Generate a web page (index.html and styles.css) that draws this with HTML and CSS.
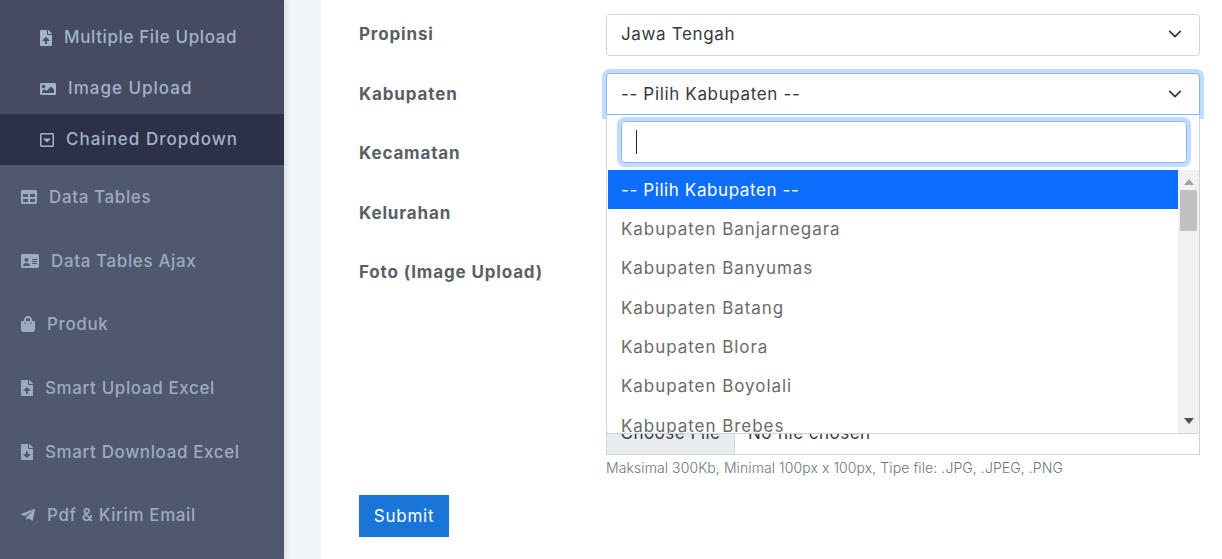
FILE: index.html
```html
<!DOCTYPE html>
<html lang="id">
<head>
<meta charset="utf-8">
<title>Chained Dropdown</title>
<link rel="stylesheet" href="styles.css">
</head>
<body>
<div class="app">
  <aside class="sidebar">
    <ul class="submenu">
      <li class="subitem"><svg class="ic ic-file" viewBox="0 0 384 512"><path d="M224 136V0H24C10.7 0 0 10.7 0 24v464c0 13.3 10.7 24 24 24h336c13.3 0 24-10.7 24-24V160H248c-13.2 0-24-10.8-24-24zm65.18 216.01H224v80c0 8.84-7.16 16-16 16h-32c-8.84 0-16-7.16-16-16v-80H94.82c-14.28 0-21.41-17.29-11.27-27.36l96.42-95.7c6.65-6.61 17.39-6.61 24.04 0l96.42 95.7c10.15 10.07 3.03 27.36-11.25 27.36zM377 105L279.1 7c-4.5-4.5-10.6-7-17-7H256v128h128v-6.1c0-6.3-2.5-12.4-7-16.9z"/></svg><span>Multiple File Upload</span></li>
      <li class="subitem"><svg class="ic ic-image" viewBox="0 0 512 512"><path d="M464 448H48c-26.51 0-48-21.49-48-48V112c0-26.51 21.49-48 48-48h416c26.51 0 48 21.49 48 48v288c0 26.51-21.49 48-48 48zM112 120c-30.928 0-56 25.072-56 56s25.072 56 56 56 56-25.072 56-56-25.072-56-56-56zM64 384h384V272l-87.515-87.515c-4.686-4.686-12.284-4.686-16.971 0L208 320l-55.515-55.515c-4.686-4.686-12.284-4.686-16.971 0L64 336v48z"/></svg><span class="wide">Image Upload</span></li>
      <li class="subitem active"><svg class="ic ic-caret" viewBox="0 0 448 512"><path d="M125.1 208h197.8c10.7 0 16.1 13 8.5 20.5l-98.9 98.3c-4.7 4.7-12.2 4.7-16.9 0l-98.9-98.3c-7.7-7.5-2.3-20.5 8.4-20.5zM448 80v352c0 26.5-21.5 48-48 48H48c-26.5 0-48-21.5-48-48V80c0-26.5 21.5-48 48-48h352c26.5 0 48 21.5 48 48zm-48 346V86c0-3.3-2.7-6-6-6H54c-3.3 0-6 2.7-6 6v340c0 3.3 2.7 6 6 6h340c3.3 0 6-2.7 6-6z"/></svg><span class="wide">Chained Dropdown</span></li>
    </ul>
    <ul class="menu">
      <li class="item"><svg class="ic ic-table" viewBox="0 0 512 512"><path d="M464 32H48C21.49 32 0 53.49 0 80v352c0 26.51 21.49 48 48 48h416c26.51 0 48-21.49 48-48V80c0-26.51-21.49-48-48-48zM224 416H64v-96h160v96zm0-160H64v-96h160v96zm224 160H288v-96h160v96zm0-160H288v-96h160v96z"/></svg><span>Data Tables</span></li>
      <li class="item"><svg class="ic ic-id" viewBox="0 0 576 512"><path fill-rule="evenodd" d="M528 32H48C21.5 32 0 53.5 0 80v352c0 26.5 21.5 48 48 48h480c26.5 0 48-21.5 48-48V80c0-26.5-21.5-48-48-48zM352 200c0-4.4 3.6-8 8-8h144c4.4 0 8 3.6 8 8v16c0 4.4-3.6 8-8 8H360c-4.4 0-8-3.6-8-8v-16zm0 64c0-4.4 3.6-8 8-8h144c4.4 0 8 3.6 8 8v16c0 4.4-3.6 8-8 8H360c-4.4 0-8-3.6-8-8v-16zm0 64c0-4.4 3.6-8 8-8h144c4.4 0 8 3.6 8 8v16c0 4.4-3.6 8-8 8H360c-4.4 0-8-3.6-8-8v-16zM176 160c35.3 0 64 28.7 64 64s-28.7 64-64 64-64-28.7-64-64 28.7-64 64-64zM67.1 396.2C75.5 370.5 99.6 320 128 320h8.2c12.3 5.1 25.7 8 39.8 8s27.6-2.9 39.8-8h8.2c28.4 0 52.5 50.5 60.9 76.2 3.2 9.9-5.2 19.8-15.6 19.8H82.7c-10.4 0-18.8-10-15.6-19.8z"/></svg><span>Data Tables Ajax</span></li>
      <li class="item"><svg class="ic ic-bag" viewBox="0 0 448 512"><path d="M352 160v-32C352 57.42 294.579 0 224 0 153.42 0 96 57.42 96 128v32H0v272c0 44.183 35.817 80 80 80h288c44.183 0 80-35.817 80-80V160h-96zm-192-32c0-35.29 28.71-64 64-64s64 28.71 64 64v32H160v-32zm160 120c-13.255 0-24-10.745-24-24s10.745-24 24-24 24 10.745 24 24-10.745 24-24 24zm-192 0c-13.255 0-24-10.745-24-24s10.745-24 24-24 24 10.745 24 24-10.745 24-24 24z"/></svg><span>Produk</span></li>
      <li class="item"><svg class="ic ic-file2" viewBox="0 0 384 512"><path d="M224 136V0H24C10.7 0 0 10.7 0 24v464c0 13.3 10.7 24 24 24h336c13.3 0 24-10.7 24-24V160H248c-13.2 0-24-10.8-24-24zm65.18 216.01H224v80c0 8.84-7.16 16-16 16h-32c-8.84 0-16-7.16-16-16v-80H94.82c-14.28 0-21.41-17.29-11.27-27.36l96.42-95.7c6.65-6.61 17.39-6.61 24.04 0l96.42 95.7c10.15 10.07 3.03 27.36-11.25 27.36zM377 105L279.1 7c-4.5-4.5-10.6-7-17-7H256v128h128v-6.1c0-6.3-2.5-12.4-7-16.9z"/></svg><span>Smart Upload Excel</span></li>
      <li class="item"><svg class="ic ic-file2" viewBox="0 0 384 512"><path d="M224 136V0H24C10.7 0 0 10.7 0 24v464c0 13.3 10.7 24 24 24h336c13.3 0 24-10.7 24-24V160H248c-13.2 0-24-10.8-24-24zm76.45 211.36l-96.42 95.7c-6.65 6.61-17.39 6.61-24.04 0l-96.42-95.7C73.42 337.29 80.54 320 94.82 320H160v-80c0-8.84 7.16-16 16-16h32c8.84 0 16 7.16 16 16v80h65.18c14.28 0 21.4 17.29 11.27 27.36zM377 105L279.1 7c-4.5-4.5-10.6-7-17-7H256v128h128v-6.1c0-6.3-2.5-12.4-7-16.9z"/></svg><span>Smart Download Excel</span></li>
      <li class="item"><svg class="ic ic-plane" viewBox="0 0 448 512"><path d="M446.7 98.6l-67.6 318.8c-5.1 22.5-18.4 28.1-37.3 17.5l-103-75.9-49.7 47.8c-5.5 5.5-10.1 10.1-20.7 10.1l7.4-104.9 190.9-172.5c8.3-7.4-1.8-11.5-12.9-4.1L117.8 284 16.2 252.2c-22.1-6.9-22.5-22.1 4.6-32.7L418.2 66.4c18.4-6.9 34.5 4.1 28.5 32.2z"/></svg><span>Pdf &amp; Kirim Email</span></li>
    </ul>
  </aside>
  <div class="gutter"></div>
  <main class="content">
    <form class="form">
      <div class="row">
        <label class="label">Propinsi</label>
        <div class="select"><span>Jawa Tengah</span><svg class="chev" viewBox="0 0 16 16"><path d="M2 5l6 6 6-6"/></svg></div>
      </div>
      <div class="row">
        <label class="label">Kabupaten</label>
        <div class="select-wrap">
          <div class="select open"><span>-- Pilih Kabupaten --</span><svg class="chev" viewBox="0 0 16 16"><path d="M2 5l6 6 6-6"/></svg></div>
          <div class="dropdown">
            <div class="search-box"><div class="search"><i class="caret"></i></div></div>
            <div class="results">
              <ul class="options">
                <li class="option selected">-- Pilih Kabupaten --</li>
                <li class="option">Kabupaten Banjarnegara</li>
                <li class="option">Kabupaten Banyumas</li>
                <li class="option">Kabupaten Batang</li>
                <li class="option">Kabupaten Blora</li>
                <li class="option">Kabupaten Boyolali</li>
                <li class="option">Kabupaten Brebes</li>
              </ul>
              <div class="scrollbar">
                <svg class="arrow" viewBox="0 0 10 6"><path d="M5 0l5 6H0z"/></svg>
                <div class="thumb"></div>
                <div class="track"></div>
                <svg class="arrow" viewBox="0 0 10 6"><path d="M0 0h10L5 6z"/></svg>
              </div>
            </div>
          </div>
        </div>
      </div>
      <div class="row">
        <label class="label">Kecamatan</label>
        <div class="select"></div>
      </div>
      <div class="row">
        <label class="label">Kelurahan</label>
        <div class="select"></div>
      </div>
      <div class="row row-foto">
        <label class="label">Foto (Image Upload)</label>
        <div class="foto">
          <div class="file"><span class="file-btn">Choose File</span><span class="file-name">No file chosen</span></div>
          <p class="hint">Maksimal 300Kb, Minimal 100px x 100px, Tipe file: .JPG, .JPEG, .PNG</p>
        </div>
      </div>
      <button type="button" class="submit">Submit</button>
    </form>
  </main>
</div>
</body>
</html>
```
FILE: styles.css
```css
* { box-sizing: border-box; }
html, body { margin: 0; padding: 0; height: 559px; overflow: hidden; background: #fff; }
body { font-family: Inter, "Open Sans", Arial, sans-serif; font-size: 16px; color: #343a40; }
ul { list-style: none; margin: 0; padding: 0; }
.app { display: flex; height: 559px; }

.sidebar { width: 284px; flex: none; background: #50586f; font-weight: 500; font-size: 17px; letter-spacing: .62px; position: relative; z-index: 1; box-shadow: 2px 0 6px rgba(60,70,90,.12); }
.submenu { background: #454b60; padding-top: 12px; }
.subitem { height: 51px; display: flex; align-items: center; padding-left: 40px; color: #a3b3cc; }
.subitem span { padding-bottom: 2px; }
.subitem .wide { letter-spacing: 1px; }
.subitem.active { background: #2d3148; }
.menu { color: #9eabbf; }
.item { height: 63.7px; display: flex; align-items: center; padding-left: 21px; }
.ic { fill: currentColor; flex: none; }
.ic-file { width: 12px; height: 16px; margin-right: 12px; }
.ic-image { width: 16px; height: 16px; margin-right: 12px; }
.ic-caret { width: 14px; height: 16px; margin-right: 12px; }
.ic-table { width: 16px; height: 16px; margin-right: 12px; }
.ic-id { width: 18px; height: 16px; margin-right: 12px; }
.ic-bag { width: 14px; height: 16px; margin-right: 12px; }
.ic-file2 { width: 12px; height: 16px; margin-right: 12px; }
.ic-plane { width: 14px; height: 16px; margin-right: 12px; }

.gutter { width: 37px; flex: none; background: #f1f4f8; }
.content { flex: 1; padding: 13.6px 22px 0 38px; min-width: 0; }
.row { display: grid; grid-template-columns: 247px 1fr; margin-bottom: 17.5px; }
.label { font-weight: 700; font-size: 17px; letter-spacing: .85px; color: #5a5f66; line-height: 41px; padding-top: .5px; }
.select, .select-wrap { position: relative; }
.select { height: 42px; border: 1px solid #ced4da; border-radius: 4px; background: #fff; display: flex; align-items: center; justify-content: space-between; padding: 0 14px 1px; color: #343a40; font-size: 17px; letter-spacing: .65px; }
.select.open { border-color: #86b7fe; border-radius: 4px 4px 0 0; box-shadow: 0 0 0 4px #c2dbfe; }
.chev { width: 14px; height: 14px; fill: none; stroke: #343a40; stroke-width: 2; stroke-linecap: round; stroke-linejoin: round; margin-right: 3px; }

.dropdown { position: absolute; left: 0; right: 0; top: 42px; z-index: 5; background: #fff; border: 1px solid #ced4da; border-top: 0; border-radius: 0 0 4px 4px; }
.search-box { padding: 6px 12px 7px 14px; }
.search { height: 42px; border: 1px solid #86b7fe; border-radius: 4px; box-shadow: 0 0 0 4px #c2dbfe; padding: 8px 14px; }
.caret { display: block; width: 1px; height: 24px; background: #222; }
.results { display: flex; height: 263px; overflow: hidden; }
.options { flex: 1; padding-left: 1px; color: #6b6b6b; font-size: 17px; letter-spacing: .95px; overflow: hidden; }
.option { height: 39.33px; display: flex; align-items: center; padding-left: 13px; }
.option.selected { background: #0d6efd; color: #fff; letter-spacing: .6px; }
.scrollbar { width: 21px; flex: none; background: #f1f1f1; display: flex; flex-direction: column; align-items: center; }
.arrow { width: 10px; height: 6px; fill: #a3a3a3; margin: 9px 0 5px; flex: none; }
.scrollbar .arrow:last-child { fill: #505050; margin: 5px 0 9px; }
.thumb { width: 17px; height: 41px; background: #c1c1c1; flex: none; }
.track { flex: 1; }

.row-foto { margin-bottom: 0; }
.foto { padding-top: 159px; }
.file { height: 44px; border: 1px solid #ced4da; display: flex; align-items: center; background: #fff; font-size: 17px; letter-spacing: .48px; }
.file-btn { width: 128px; height: 100%; background: #e9ecef; border-right: 1px solid #ced4da; display: flex; align-items: center; justify-content: center; }
.file-name { padding-left: 13px; }
.hint { margin: 2px 0 0; font-size: 14px; letter-spacing: .09px; line-height: 21px; color: #6c757d; font-weight: 300; }
.submit { display: block; margin-top: 17.5px; width: 90px; height: 42px; background: #1976d8; color: #fff; border: 0; border-radius: 0; font: 400 17px Inter, Arial, sans-serif; letter-spacing: .75px; padding: 0; }
```
